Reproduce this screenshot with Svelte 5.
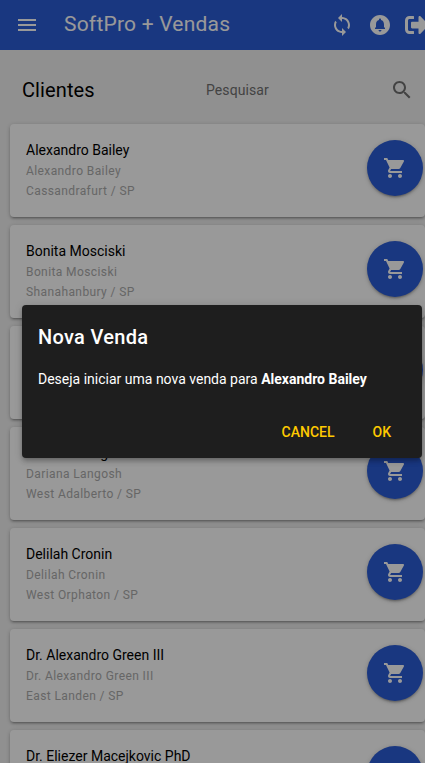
<script>
  const clients = [
    ['Alexandro Bailey', 'Cassandrafurt / SP'],
    ['Bonita Mosciski', 'Shanahanbury / SP'],
    ['Camila Bailey', 'East Landen / SP'],
    ['Dariana Langosh', 'West Adalberto / SP'],
    ['Delilah Cronin', 'West Orphaton / SP'],
    ['Dr. Alexandro Green III', 'East Landen / SP'],
    ['Dr. Eliezer Macejkovic PhD', 'West Landen / SP'],
  ];
</script>

<div class="app">
  <header>
    <svg class="menu" viewBox="0 0 24 24"><path d="M3 18h18v-2H3v2zm0-5h18v-2H3v2zm0-7v2h18V6H3z" /></svg>
    <h1>SoftPro + Vendas</h1>
    <nav>
      <svg viewBox="0 0 24 24"><path d="M12 4V1L8 5l4 4V6c3.31 0 6 2.69 6 6 0 1.01-.25 1.97-.7 2.8l1.46 1.46C19.54 15.03 20 13.57 20 12c0-4.42-3.58-8-8-8zm0 14c-3.31 0-6-2.69-6-6 0-1.01.25-1.97.7-2.8L5.24 7.74C4.46 8.97 4 10.43 4 12c0 4.42 3.58 8 8 8v3l4-4-4-4v3z" /></svg>
      <svg viewBox="0 0 24 24"><path d="M12 2C6.480 2 2 6.480 2 12s4.480 10 10 10 10-4.480 10-10S17.520 2 12 2zm0 16.500c-.83 0-1.500-.67-1.500-1.500h3c0 .83-.67 1.500-1.500 1.500zm5-2.500H7v-1l1-1v-2.610C8 9.270 9.030 7.470 11 7v-.5c0-.57.43-1 1-1s1 .43 1 1V7c1.970.47 3 2.280 3 4.390V14l1 1v1z" /></svg>
      <svg viewBox="0 0 512 512"><path d="M497 273L329 441c-15 15-41 4.500-41-17v-96H152c-13.300 0-24-10.700-24-24v-96c0-13.300 10.700-24 24-24h136V88c0-21.400 25.900-32 41-17l168 168c9.300 9.400 9.300 24.600 0 34zM192 436v-40c0-6.600-5.400-12-12-12H96c-17.700 0-32-14.300-32-32V160c0-17.700 14.300-32 32-32h84c6.600 0 12-5.400 12-12V76c0-6.600-5.400-12-12-12H96c-53 0-96 43-96 96v192c0 53 43 96 96 96h84c6.600 0 12-5.400 12-12z" /></svg>
    </nav>
  </header>

  <section class="toolbar">
    <h2>Clientes</h2>
    <label><span>Pesquisar</span>
      <svg viewBox="0 0 24 24"><path d="M15.500 14h-.79l-.28-.27C15.410 12.590 16 11.110 16 9.500 16 5.910 13.090 3 9.500 3S3 5.910 3 9.500 5.910 16 9.500 16c1.610 0 3.090-.59 4.230-1.570l.27.28v.79l5 4.990L20.490 19l-4.990-5zm-6 0C7.010 14 5 11.990 5 9.500S7.010 5 9.500 5 14 7.010 14 9.500 11.990 14 9.500 14z" /></svg>
    </label>
  </section>

  <main>
    {#each clients as [name, city]}
      <article>
        <div class="info">
          <div class="name">{name}</div>
          <div class="caption">{name}</div>
          <div class="caption">{city}</div>
        </div>
        <button class="fab" aria-label="Nova venda">
          <svg viewBox="0 0 24 24"><path d="M7 18c-1.100 0-1.990.9-1.990 2S5.900 22 7 22s2-.9 2-2-.9-2-2-2zM1 2v2h2l3.600 7.590-1.350 2.450c-.16.28-.25.61-.25.96 0 1.100.9 2 2 2h12v-2H7.420c-.14 0-.25-.11-.25-.25l.03-.12.9-1.630h7.450c.75 0 1.410-.41 1.750-1.030l3.580-6.490c.08-.14.12-.31.12-.48 0-.55-.45-1-1-1H5.210l-.94-2H1zm16 16c-1.100 0-1.990.9-1.990 2s.89 2 1.990 2 2-.9 2-2-.9-2-2-2z" /></svg>
        </button>
      </article>
    {/each}
  </main>

  <div class="backdrop">
    <div class="dialog" role="dialog" aria-modal="true">
      <h3>Nova Venda</h3>
      <p>Deseja iniciar uma nova venda para <b>Alexandro Bailey</b></p>
      <div class="actions">
        <button>CANCEL</button>
        <button>OK</button>
      </div>
    </div>
  </div>
</div>

<style>
  .app {
    position: relative;
    box-sizing: border-box;
    width: 425px;
    height: 763px;
    overflow: hidden;
    background: #f1f1f1;
    font-family: Roboto, 'Noto Sans', sans-serif;
    font-size: 14px;
    color: #000;
  }
  h1, h2, h3, p { margin: 0; }
  svg { display: block; width: 24px; height: 24px; flex: none; fill: currentColor; }
  button { border: 0; padding: 0; margin: 0; font-family: inherit; }
  header {
    display: flex;
    align-items: center;
    height: 50px;
    padding-left: 15px;
    background: #2b5cd6;
    color: #fff;
  }
  h1 {
    flex: none;
    width: 266px;
    margin-left: 25px;
    font-size: 21px;
    font-weight: 400;
    letter-spacing: 0.21px;
    line-height: 48px;
    height: 50px;
  }
  nav { display: flex; gap: 13.5px; }
  .toolbar {
    display: flex;
    align-items: center;
    height: 74px;
    padding: 6px 11px 0 22px;
    box-sizing: border-box;
  }
  h2 { width: 184px; font-size: 20px; font-weight: 400; letter-spacing: 0.1px; }
  label { flex: 1; display: flex; align-items: center; justify-content: space-between; color: #707070; }
  label span { letter-spacing: 0.08px; }
  main { display: flex; flex-direction: column; gap: 8px; padding-left: 10px; }
  article {
    display: flex;
    justify-content: space-between;
    box-sizing: border-box;
    flex: none;
    height: 93px;
    padding: 16px 2px 16px 16px;
    border-radius: 4px;
    background: #fff;
    box-shadow: 0 1px 5px rgba(0, 0, 0, 0.2), 0 2px 2px rgba(0, 0, 0, 0.14), 0 3px 1px -2px rgba(0, 0, 0, 0.12);
  }
  .name { line-height: 20px; }
  .caption { font-size: 12px; line-height: 20px; letter-spacing: 0.4px; color: #ababab; }
  .name + .caption { margin-top: 1px; }
  .fab {
    display: flex;
    align-items: center;
    justify-content: center;
    width: 56px;
    height: 56px;
    border-radius: 50%;
    background: #2b5cd6;
    color: #fff;
    box-shadow: 0 1px 5px rgba(0, 0, 0, 0.2), 0 2px 2px rgba(0, 0, 0, 0.14), 0 3px 1px -2px rgba(0, 0, 0, 0.12);
  }
  .backdrop {
    position: absolute;
    inset: 0;
    display: flex;
    align-items: center;
    padding-left: 22px;
    background: rgba(0, 0, 0, 0.4);
  }
  .dialog {
    box-sizing: border-box;
    width: 400px;
    height: 153px;
    padding: 16px;
    border-radius: 4px;
    background: #1e1e1e;
    color: #fff;
    box-shadow: 0 2px 4px -1px rgba(0, 0, 0, 0.2), 0 4px 5px rgba(0, 0, 0, 0.14), 0 1px 10px rgba(0, 0, 0, 0.12);
  }
  h3 { font-size: 20px; font-weight: 500; line-height: 32px; letter-spacing: 0.3px; }
  p { margin-top: 16px; line-height: 21px; }
  .actions { display: flex; justify-content: flex-end; gap: 8px; margin-top: 24px; }
  .actions button {
    height: 36px;
    padding: 0 15px;
    background: none;
    color: #ffca00;
    font-size: 14px;
    font-weight: 500;
    line-height: 36px;
  }
</style>
